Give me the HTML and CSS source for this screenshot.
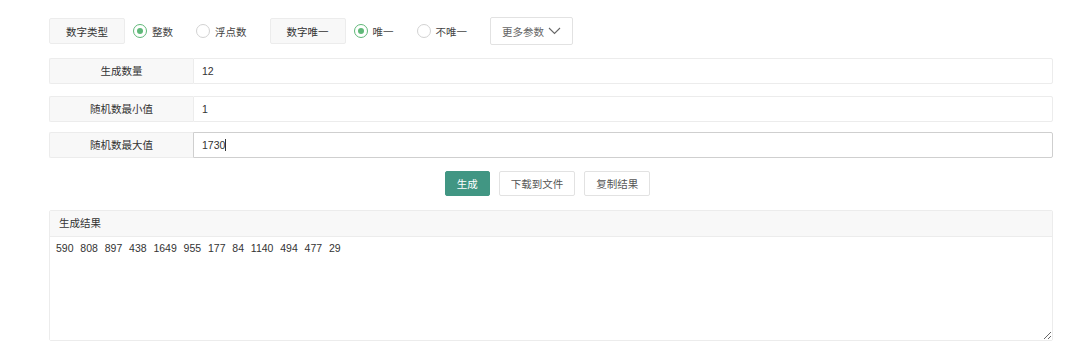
FILE: index.html
```html
<!DOCTYPE html>
<html lang="zh-CN">

<head>
    <meta charset="UTF-8">
    <meta name="viewport" content="width=device-width, initial-scale=1.0">
    <title>随机数生成</title>
    <link rel="stylesheet" href="styles.css">
</head>

<body>
    <div class="page">
        <div class="options">
            <div class="opt-label">数字类型</div>
            <label class="radio checked"><span class="circle"></span>整数</label>
            <label class="radio"><span class="circle"></span>浮点数</label>
            <div class="opt-label">数字唯一</div>
            <label class="radio checked"><span class="circle"></span>唯一</label>
            <label class="radio"><span class="circle"></span>不唯一</label>
            <button class="more-btn">更多参数
                <svg width="13" height="8" viewBox="0 0 13 8">
                    <polyline points="1,1 6.5,6.5 12,1" fill="none" stroke="#666" stroke-width="1.1" />
                </svg>
            </button>
        </div>

        <div class="field">
            <div class="field-label">生成数量</div>
            <input class="field-input" type="text" value="12">
        </div>
        <div class="field">
            <div class="field-label">随机数最小值</div>
            <input class="field-input" type="text" value="1">
        </div>
        <div class="field field-last">
            <div class="field-label">随机数最大值</div>
            <div class="field-input focused">1730<span class="caret"></span></div>
        </div>

        <div class="actions">
            <button class="btn btn-primary">生成</button>
            <button class="btn">下载到文件</button>
            <button class="btn">复制结果</button>
        </div>

        <div class="result">
            <div class="result-head">生成结果</div>
            <textarea class="result-body" readonly>590  808  897  438  1649  955  177  84  1140  494  477  29</textarea>
        </div>
    </div>
</body>

</html>
```

FILE: styles.css
```css
* {
    margin: 0;
    padding: 0;
    box-sizing: border-box;
}

body {
    font-family: 'Liberation Sans', 'Noto Sans CJK SC', sans-serif;
    font-size: 10.5px;
    color: #333;
    background: #fff;
}

.page {
    width: 1004px;
    margin-left: 49px;
    padding-top: 17px;
}

/* top option row */
.options {
    display: flex;
    align-items: center;
    height: 28px;
}

.opt-label {
    width: 76px;
    height: 26px;
    line-height: 26px;
    text-align: center;
    background: #f8f8f8;
    border: 1px solid #ececec;
    border-radius: 2px;
    margin-right: 8px;
}

.radio {
    display: flex;
    align-items: center;
    margin-right: 23px;
    color: #444;
}

.circle {
    width: 14px;
    height: 14px;
    border: 1px solid #d2d2d2;
    border-radius: 50%;
    margin-right: 5px;
    display: flex;
    align-items: center;
    justify-content: center;
}

.radio.checked .circle {
    border-color: #5fb878;
}

.radio.checked .circle::after {
    content: '';
    width: 6px;
    height: 6px;
    border-radius: 50%;
    background: #5fb878;
}

.more-btn {
    width: 83px;
    height: 28px;
    background: #fff;
    border: 1px solid #e2e2e2;
    border-radius: 2px;
    font: inherit;
    color: #666;
    display: flex;
    align-items: center;
    justify-content: center;
    gap: 4px;
}

/* input rows */
.field {
    display: flex;
    height: 26px;
    margin-top: 13px;
}

.field + .field {
    margin-top: 12px;
}

.field-last {
    margin-top: 10px !important;
}

.field-label {
    width: 144px;
    line-height: 24px;
    text-align: center;
    background: #f8f8f8;
    border: 1px solid #ececec;
    border-right: none;
    border-radius: 2px 0 0 2px;
}

.field-input {
    flex: 1;
    height: 26px;
    border: 1px solid #ececec;
    border-radius: 0 2px 2px 0;
    padding: 0 8px;
    font: inherit;
    color: #333;
    outline: none;
    background: #fff;
}

div.field-input {
    line-height: 24px;
}

.field-input.focused {
    border-color: #cfcfcf;
}

.caret {
    display: inline-block;
    width: 1px;
    height: 12px;
    background: #333;
    vertical-align: -2px;
}

/* buttons */
.actions {
    display: flex;
    justify-content: center;
    gap: 9px;
    margin-top: 13px;
    padding-right: 7px;
}

.btn {
    height: 25px;
    padding: 0 11px;
    background: #fff;
    border: 1px solid #e2e2e2;
    border-radius: 2px;
    font: inherit;
    color: #555;
}

.btn-primary {
    background: #419683;
    border-color: #419683;
    color: #fff;
}

/* result panel */
.result {
    margin-top: 14px;
    border: 1px solid #ececec;
    border-radius: 2px;
    height: 131px;
    display: flex;
    flex-direction: column;
}

.result-head {
    height: 26px;
    line-height: 25px;
    padding-left: 9px;
    background: #f8f8f8;
    border-bottom: 1px solid #ececec;
}

.result-body {
    flex: 1;
    border: none;
    outline: none;
    padding: 5px 6px;
    font-family: 'Liberation Sans', sans-serif;
    font-size: 10.5px;
    word-spacing: 0.5px;
    color: #333;
}
```
